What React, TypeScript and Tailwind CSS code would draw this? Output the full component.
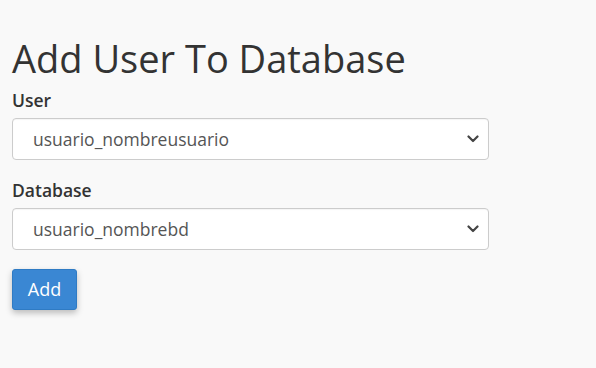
import React from 'react';

const ChevronDown = () => (
    <svg width="12" height="8" viewBox="0 0 12 8" className="pointer-events-none absolute right-[10px] top-1/2 -translate-y-1/2">
        <path d="M1.5 1.5 L6 6 L10.5 1.5" fill="none" stroke="#444" strokeWidth="2.2" strokeLinecap="round" strokeLinejoin="round" />
    </svg>
);

type SelectFieldProps = {
    label: string;
    value: string;
};

const SelectField = ({ label, value }: SelectFieldProps) => (
    <div>
        <label className="block text-[17.5px] font-semibold leading-[24px] text-[#333]">{label}</label>
        <div className="relative mt-[6px] w-[477px]">
            <select
                defaultValue={value}
                className="h-[42px] w-full appearance-none rounded-[4px] border border-[#cccccc] bg-white pl-[20px] pr-8 text-[17.5px] text-[#555] shadow-[inset_0_1px_1px_rgba(0,0,0,0.04)] focus:outline-none"
            >
                <option value={value}>{value}</option>
            </select>
            <ChevronDown />
        </div>
    </div>
);

export default function App() {
    return (
        <div className="min-h-[368px] bg-[#f9f9f9] px-[12px] pt-[33px] font-['Open_Sans',sans-serif] text-[#333]">
            <h1 className="text-[38px] font-normal leading-[50px]">Add User To Database</h1>
            <div className="mt-[5px] space-y-[18px]">
                <SelectField label="User" value="usuario_nombreusuario" />
                <SelectField label="Database" value="usuario_nombrebd" />
            </div>
            <button
                type="button"
                className="mt-[19px] h-[41px] w-[65px] rounded-[3px] border border-[#2f7bc4] bg-[#3a87d3] text-[18px] text-white shadow-[0_3px_6px_rgba(0,0,0,0.25)]"
            >
                Add
            </button>
        </div>
    );
}
